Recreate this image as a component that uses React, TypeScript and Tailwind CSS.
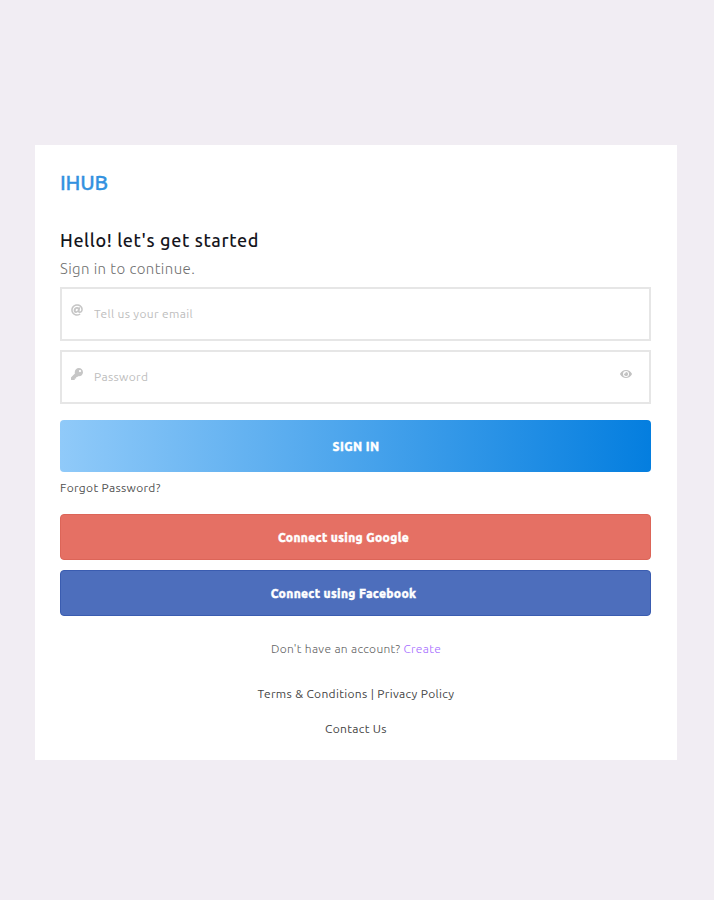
import React from 'react'
import { FaAt, FaEye, FaKey } from 'react-icons/fa'

const Field = ({
  icon,
  placeholder,
  type,
  className,
  children,
}: {
  icon: React.ReactNode
  placeholder: string
  type: string
  className: string
  children?: React.ReactNode
}) => {
  return (
    <div className={`flex border-2 border-[#e6e6e6] bg-white pl-2 ${className}`}>
      <span className="w-6 shrink-0 pl-px text-[#c6c6c6]">{icon}</span>
      <input
        type={type}
        placeholder={placeholder}
        className="min-w-0 grow bg-transparent text-xs tracking-[0.35px] text-gray-700 outline-none placeholder:text-[#bdbdbd]"
      />
      {children}
    </div>
  )
}

export default function App() {
  return (
    <div className="min-h-screen bg-[#f1edf3] pl-[35px] pt-[145px] font-['Ubuntu','Noto_Sans',sans-serif] tracking-[0.33px]">
      <main className="h-[615px] w-[642px] bg-white pl-[25px] pr-[26px] pt-6">
        <div className="flex h-7 items-center text-[21px] font-medium tracking-[-0.2px] text-[#3392e0] [-webkit-text-stroke:0.3px]">
          <span>IHUB</span>
        </div>
        <h1 className="mt-[29px] flex h-7 items-center text-lg font-medium tracking-[0.62px] text-[#15151c]">
          <span>Hello! let's get started</span>
        </h1>
        <p className="mt-px flex h-7 items-center text-[15px] font-light tracking-[0.4px] text-[#6f6f6f]">
          <span>Sign in to continue.</span>
        </p>
        <form onSubmit={(e) => e.preventDefault()}>
          <Field icon={<FaAt className="mt-[15px] size-3" />} type="email" placeholder="Tell us your email" className="mt-1 h-[54px]" />
          <Field icon={<FaKey className="mt-4 size-3" />} type="password" placeholder="Password" className="mt-[9px] h-[54px]">
            <FaEye className="mr-[17px] mt-4 size-3 shrink-0 text-[#c2c2c2]" />
          </Field>
          <button className="mt-4 h-[52px] w-full rounded bg-linear-to-r/srgb from-[#90caf9] to-[#047edf] pl-px pt-px text-xs font-extrabold tracking-[0.4px] text-white [-webkit-text-stroke:0.4px]">
            <span>SIGN IN</span>
          </button>
          <a href="#" className="flex h-8 items-center text-xs text-[#505050]">
            <span>Forgot Password?</span>
          </a>
          <button className="mt-2.5 block h-[46px] w-full rounded border border-[#dc6558] bg-[#e57064] pr-6 pt-px text-xs font-extrabold text-white [-webkit-text-stroke:0.4px]">
            <span>Connect using Google</span>
          </button>
          <button className="mt-2.5 block h-[46px] w-full rounded border border-[#3a5cb0] bg-[#4d6ebc] pr-6 pt-px text-xs font-extrabold text-white [-webkit-text-stroke:0.4px]">
            <span>Connect using Facebook</span>
          </button>
        </form>
        <p className="mt-[23px] flex h-5 items-center justify-center pl-px text-xs font-light text-[#606060]">
          <span>
            Don't have an account?{' '}
            <a href="#" className="text-[#a56bff]">Create</a>
          </span>
        </p>
        <p className="mt-[25px] flex h-5 items-center justify-center pl-px text-xs text-[#444]">
          <span>Terms &amp; Conditions | Privacy Policy</span>
        </p>
        <p className="mt-[15px] flex h-5 items-center justify-center pl-px text-xs text-[#444]">
          <span>Contact Us</span>
        </p>
      </main>
    </div>
  )
}
